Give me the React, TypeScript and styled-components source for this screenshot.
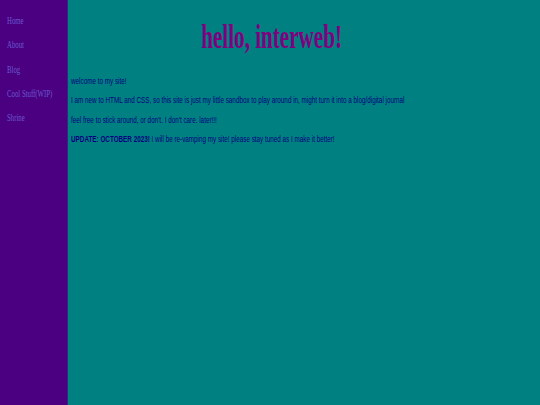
import React from 'react';
import styled, { createGlobalStyle } from 'styled-components';

// the reference is squeezed horizontally, so the page is laid out wider and scaled on x
const SQUEEZE = 0.64;

const GlobalStyle = createGlobalStyle`
  html, body {
    margin: 0;
    padding: 0;
    background: #008080;
    overflow: hidden;
  }
`;

const Page = styled.div`
  width: ${540 / SQUEEZE}px;
  height: 405px;
  display: flex;
  transform: scaleX(${SQUEEZE});
  transform-origin: top left;
`;

const Sidebar = styled.nav`
  width: 106px;
  flex-shrink: 0;
  background: #4b0082;
  display: flex;
  flex-direction: column;
  gap: 10.3px;
  padding: 14px 0 0 11px;
  box-sizing: border-box;
`;

const NavLink = styled.a`
  font-family: 'Liberation Serif', 'Times New Roman', serif;
  font-size: 10.6px;
  line-height: 14px;
  color: #6a5acd;
  text-decoration: none;
`;

const Main = styled.main`
  flex: 1;
  background: #008080;
  padding: 18px 106px 0 5px;
`;

const Title = styled.h1`
  margin: 0 0 20px;
  text-align: center;
  font-family: 'Liberation Serif', 'Times New Roman', serif;
  font-weight: 700;
  font-size: 33px;
  line-height: 38px;
  color: #800080;
`;

const Para = styled.p`
  margin: 0 0 8.5px;
  font-family: 'Liberation Sans', Arial, sans-serif;
  font-size: 9.9px;
  line-height: 10.8px;
  color: #000080;
`;

const links = ['Home', 'About', 'Blog', 'Cool Stuff(WIP)', 'Shrine'];

export default function App() {
  return (
    <>
      <GlobalStyle />
      <Page>
        <Sidebar>
          {links.map(l => (
            <NavLink key={l} href="#">{l}</NavLink>
          ))}
        </Sidebar>
        <Main>
          <Title>hello, interweb!</Title>
          <Para>welcome to my site!</Para>
          <Para>
            I am new to HTML and CSS, so this site is just my little sandbox to play around in, might turn it into a blog/digital journal
          </Para>
          <Para>feel free to stick around, or don't. I don't care. later!!!</Para>
          <Para>
            <strong>UPDATE: OCTOBER 2023!</strong> I will be re-vamping my site! please stay tuned as I make it better!
          </Para>
        </Main>
      </Page>
    </>
  );
}
